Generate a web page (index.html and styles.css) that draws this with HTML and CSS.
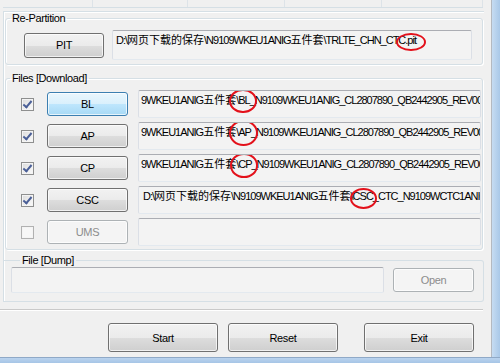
FILE: index.html
```html
<!DOCTYPE html>
<html lang="zh-CN">
<head>
    <meta charset="UTF-8">
    <title>Odin</title>
    <link rel="stylesheet" href="styles.css">
</head>
<body>
    <div class="screen">
        <div class="client">
            <div class="top-strip">
                <div class="cell c1"></div>
                <div class="cell c2"></div>
                <div class="cell c3"></div>
                <div class="cell c4"></div>
                <div class="cell c5"></div>
            </div>

            <div class="panel">
                <fieldset class="group repartition">
                    <legend>Re-Partition</legend>
                    <div class="row">
                        <button class="btn pit-btn">PIT</button>
                        <div class="path pit-path">D:\<span class="cjk">网页下载的保存</span>\N9109WKEU1ANIG<span class="cjk">五件套</span>\TRLTE_CHN_CT<span class="circled c-pit">C.pit</span></div>
                    </div>
                </fieldset>

                <fieldset class="group files">
                    <legend>Files [Download]</legend>
                    <div class="file-row">
                        <span class="check on"></span>
                        <button class="btn file-btn active">BL</button>
                        <div class="path file-path">9WKEU1ANIG<span class="cjk">五件套</span><span class="circled c-bl">\BL</span>_N9109WKEU1ANIG_CL2807890_QB2442905_REV00_user_low_ship.tar.md5</div>
                    </div>
                    <div class="file-row">
                        <span class="check on"></span>
                        <button class="btn file-btn">AP</button>
                        <div class="path file-path">9WKEU1ANIG<span class="cjk">五件套</span><span class="circled c-ap">\AP</span>_N9109WKEU1ANIG_CL2807890_QB2442905_REV00_user_low_ship.tar.md5</div>
                    </div>
                    <div class="file-row">
                        <span class="check on"></span>
                        <button class="btn file-btn">CP</button>
                        <div class="path file-path">9WKEU1ANIG<span class="cjk">五件套</span><span class="circled c-cp">\CP</span>_N9109WKEU1ANIG_CL2807890_QB2442905_REV00_user_low_ship.tar.md5</div>
                    </div>
                    <div class="file-row">
                        <span class="check on"></span>
                        <button class="btn file-btn">CSC</button>
                        <div class="path file-path csc-path">D:\<span class="cjk">网页下载的保存</span>\N9109WKEU1ANIG<span class="cjk">五件套</span><span class="circled c-csc">\CSC</span>_CTC_N9109WCTC1ANIG_CL2807890.tar.md5</div>
                    </div>
                    <div class="file-row">
                        <span class="check off"></span>
                        <button class="btn file-btn" disabled>UMS</button>
                        <div class="path file-path"></div>
                    </div>
                </fieldset>

                <fieldset class="group dump">
                    <legend>File [Dump]</legend>
                    <div class="row">
                        <div class="path dump-path"></div>
                        <button class="btn open-btn" disabled>Open</button>
                    </div>
                </fieldset>
            </div>

            <div class="actions">
                <button class="btn big-btn">Start</button>
                <button class="btn big-btn">Reset</button>
                <button class="btn big-btn exit-btn">Exit</button>
            </div>
        </div>
        <div class="frame-right"></div>
    </div>
    <div class="frame-bottom"></div>
</body>
</html>
```

FILE: styles.css
```css
* {
    box-sizing: border-box;
}

body {
    margin: 0;
    width: 500px;
    height: 363px;
    overflow: hidden;
    background: #f0f0f0;
    font-family: 'Liberation Sans', 'Noto Sans CJK SC', sans-serif;
    font-size: 11px;
    letter-spacing: -0.4px;
    color: #000;
}

.screen {
    display: flex;
    height: 357px;
}

.client {
    width: 492px;
    border-right: 1px solid #b4b9c0;
}

.frame-right {
    width: 8px;
    background: linear-gradient(to right, #c6dcf2, #a9c8e8);
}

.frame-bottom {
    height: 6px;
    border-top: 1px solid #8fa9c7;
    background: linear-gradient(to bottom, #bad3ee, #a6c5e6);
}

/* strip of the panel above */
.top-strip {
    display: flex;
    height: 8px;
    margin-left: 3px;
    width: 480px;
    border-bottom: 1px solid #d5dfe5;
}

.top-strip .cell {
    border-right: 1px solid #dde3e8;
}

.c1 { width: 90px; }
.c2 { width: 95px; }
.c3 { width: 97px; }
.c4 { width: 97px; }
.c5 { width: 101px; }

.panel {
    margin: 3px 0 0 3px;
    width: 481px;
    border-left: 1px solid #d5dfe5;
    border-top: 1px solid #d5dfe5;
    box-shadow: inset 1px 1px #fff;
}

/* group boxes */
.group {
    margin: 0 0 0 1px;
    width: 478px;
    border: 1px solid #d5dfe5;
    border-radius: 3px;
    box-shadow: inset 1px 1px #fff, 1px 1px #fff;
    padding: 5px 10px 4px 18px;
}

.group legend {
    padding: 0 2px;
    margin-left: -14px;
    line-height: 13px;
    font-size: 11px;
}

.files {
    margin-top: 7px;
    padding: 5px 1px 3px 15px;
}

.files legend {
    margin-left: -11px;
}

.dump {
    margin-top: 4px;
    margin-left: 0;
    width: 480px;
    border-left: none;
    border-radius: 0 3px 3px 0;
    box-shadow: none;
    padding: 0 9px 8px 6px;
}

.dump legend {
    margin-left: 10px;
}

.row {
    display: flex;
    align-items: center;
    gap: 8px;
}

/* buttons */
.btn {
    font-family: 'Liberation Sans', sans-serif;
    font-size: 11px;
    letter-spacing: -0.3px;
    color: #000;
    border: 1px solid #707070;
    border-radius: 3px;
    background: linear-gradient(to bottom, #f2f2f2 0%, #ebebeb 50%, #dddddd 51%, #cfcfcf 100%);
    box-shadow: inset 0 0 0 1px rgba(255, 255, 255, 0.7);
    padding: 0;
}

.btn.active {
    border-color: #3c7fb1;
    background: linear-gradient(to bottom, #eaf6fd 0%, #d9f0fc 50%, #bee6fd 51%, #a7d9f5 100%);
}

.btn:disabled {
    color: #8c8c8c;
    border-color: #adb2b5;
    background: #f4f4f4;
}

.pit-btn {
    width: 80px;
    height: 25px;
}

.file-btn {
    width: 81px;
    height: 24px;
}

.open-btn {
    width: 81px;
    height: 24px;
    margin-left: 1px;
}

.big-btn {
    width: 110px;
    height: 29px;
}

/* text boxes */
.path {
    position: relative;
    background: #f3f3f3;
    border: 1px solid #dbdfe6;
    border-top-color: #abadb3;
    border-bottom-color: #e3e9ef;
    border-radius: 2px;
    padding: 2px 3px 0 3px;
    white-space: nowrap;
    overflow: hidden;
    line-height: 14px;
    letter-spacing: -1px;
}

.cjk {
    font-size: 11px;
    letter-spacing: 0;
}

.pit-path {
    width: 360px;
    height: 30px;
}

.file-path {
    width: 343px;
    height: 28px;
    padding-left: 2px;
}

.csc-path {
    padding-left: 4px;
}

.dump-path {
    width: 373px;
    height: 26px;
    margin-left: 1px;
}

/* red marks drawn around parts of the paths */
.circled {
    position: relative;
}

.circled::after {
    content: "";
    position: absolute;
    border: 2px solid #e3111b;
    border-radius: 50%;
}

.c-pit::after { left: -2px; right: -10px; top: -1px; bottom: -5px; }
.c-bl::after  { left: -7px; right: -7px; top: -5px; bottom: -7px; }
.c-ap::after  { left: -7px; right: -7px; top: -6px; bottom: -8px; }
.c-cp::after  { left: -6px; right: -7px; top: -5px; bottom: -8px; }
.c-csc::after { left: -1px; right: -4px; top: -2px; bottom: -7px; }

/* file rows */
.file-row {
    display: flex;
    align-items: center;
    height: 28px;
    margin-bottom: 4px;
}

.file-row:last-child {
    margin-bottom: 0;
}

.check {
    width: 13px;
    height: 13px;
    border: 1px solid #8e8f8f;
    background: linear-gradient(135deg, #dcdcdc, #fbfbfb);
    box-shadow: inset 0 0 0 1px #f4f4f4;
    margin-right: 13px;
    position: relative;
}

.check.on::after {
    content: "";
    position: absolute;
    left: 3px;
    top: 0;
    width: 3px;
    height: 7px;
    border: solid #4a5f97;
    border-width: 0 2px 2px 0;
    transform: rotate(40deg);
}

.check.off {
    border-color: #b1b1b1;
    background: #f7f7f7;
}

.file-btn {
    margin-right: 10px;
}

/* bottom part */
.actions {
    margin-top: 7px;
    border-top: 1px solid #c9c9c9;
    box-shadow: inset 0 1px #fff;
    width: 483px;
    display: flex;
    padding: 13px 0 0 108px;
    gap: 10px;
}

.exit-btn {
    margin-left: 16px;
}
```
